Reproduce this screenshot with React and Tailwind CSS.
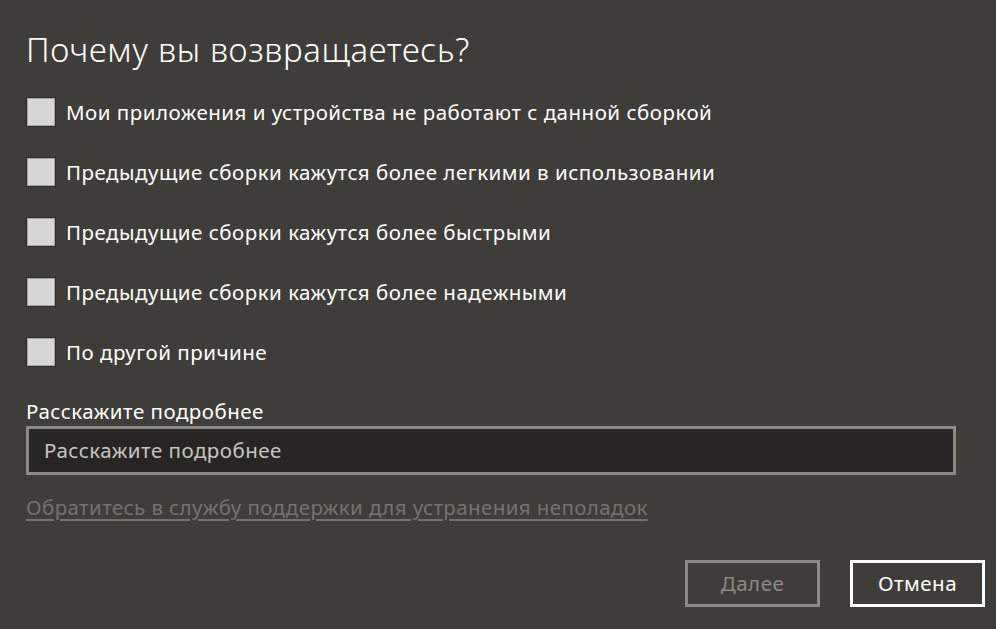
import React from "react";

const reasons = [
  "Мои приложения и устройства не работают с данной сборкой",
  "Предыдущие сборки кажутся более легкими в использовании",
  "Предыдущие сборки кажутся более быстрыми",
  "Предыдущие сборки кажутся более надежными",
  "По другой причине",
];

const App = () => {
  return (
    <div
      className="w-[996px] h-[629px] bg-[#3f3d39] text-white flex flex-col pl-[26px] pr-[11px] overflow-hidden"
      style={{ fontFamily: '"Noto Sans", "Open Sans", sans-serif' }}
    >
      <h1 className="text-[33px] font-light leading-[40px] mt-[30px] tracking-[0.65px]">
        Почему вы возвращаетесь?
      </h1>

      <div className="flex flex-col gap-[30px] mt-[27px]">
        {reasons.map((r) => (
          <label key={r} className="flex items-center h-[30px] gap-[10px]">
            <span className="w-[30px] h-[30px] border border-[#2f2d2a] bg-[#d6d6d4] shadow-[inset_0_0_0_1px_#a8a7a4] shrink-0" />
            <span className="text-[20.5px] leading-[28px] tracking-[0.5px]">{r}</span>
          </label>
        ))}
      </div>

      <div className="text-[20.5px] leading-[28px] tracking-[0.5px] mt-[30px]">Расскажите подробнее</div>
      <div className="mt-[1px] w-[930px] h-[49px] border-[3px] border-[#8b8a87] bg-[#282624] flex items-center px-[15px]">
        <span className="text-[20.5px] tracking-[0.5px] text-[#c6c5c2]">Расскажите подробнее</span>
      </div>

      <a className="mt-[18px] text-[20.5px] leading-[28px] tracking-[0.4px] text-[#75736f] underline underline-offset-[4px] w-fit">
        Обратитесь в службу поддержки для устранения неполадок
      </a>

      <div className="flex justify-end gap-[30px] mt-[39px]">
        <button className="w-[135px] h-[47px] border-[3px] border-[#8b8a87] text-[#8b8a87] text-[20.5px] tracking-[0.5px]">
          Далее
        </button>
        <button className="w-[135px] h-[47px] border-[3px] border-white text-white text-[20.5px] tracking-[0.5px]">
          Отмена
        </button>
      </div>
    </div>
  );
};

export default App;
